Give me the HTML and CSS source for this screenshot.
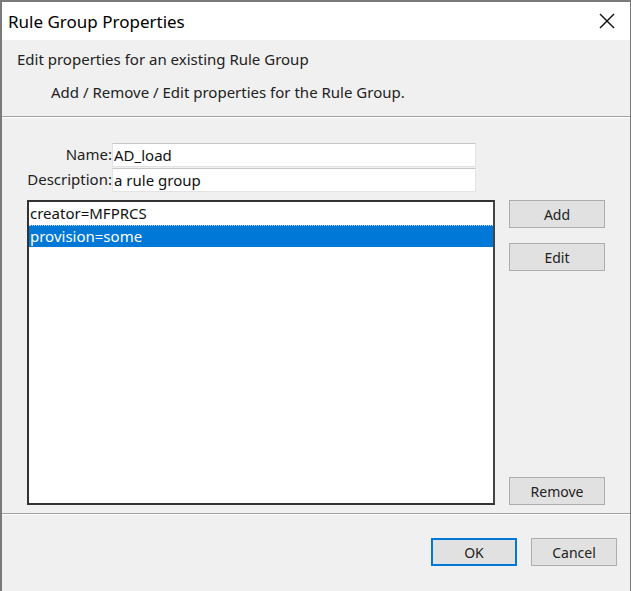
FILE: index.html
```html
<!DOCTYPE html>
<html lang="en">
<head>
    <meta charset="UTF-8">
    <title>Rule Group Properties</title>
    <link rel="stylesheet" href="styles.css">
</head>
<body>
    <div class="window">
        <div class="titlebar">
            <span class="title">Rule Group Properties</span>
            <svg class="close" width="18" height="18" viewBox="0 0 18 18" fill="none" stroke="#111" stroke-width="1.4">
                <line x1="2" y1="2" x2="16" y2="16"/>
                <line x1="16" y1="2" x2="2" y2="16"/>
            </svg>
        </div>
        <div class="header">
            <div class="heading">Edit properties for an existing Rule Group</div>
            <div class="subheading">Add / Remove / Edit properties for the Rule Group.</div>
        </div>
        <div class="content">
            <div class="fields">
                <label class="label">Name:</label>
                <input class="field" type="text" value="AD_load">
                <label class="label">Description:</label>
                <input class="field" type="text" value="a rule group">
            </div>
            <div class="list-area">
                <div class="listbox">
                    <div class="item">creator=MFPRCS</div>
                    <div class="item selected">provision=some</div>
                </div>
                <div class="side-buttons">
                    <button class="btn">Add</button>
                    <button class="btn">Edit</button>
                    <button class="btn push-down">Remove</button>
                </div>
            </div>
        </div>
        <div class="footer">
            <button class="btn default">OK</button>
            <button class="btn">Cancel</button>
        </div>
    </div>
</body>
</html>
```

FILE: styles.css
```css
:root {
    --face: #f0f0f0;
    --edge: #7a7a7a;
    --btn: #e1e1e1;
    --btn-border: #adadad;
    --select: #0078d7;
}

* {
    margin: 0;
    padding: 0;
    box-sizing: border-box;
    font-family: "Noto Sans", "DejaVu Sans", sans-serif;
}

body {
    width: 631px;
    height: 591px;
    overflow: hidden;
    background: var(--face);
}

.window {
    width: 631px;
    height: 591px;
    border: 2px solid var(--edge);
    border-bottom: none;
    border-right-width: 1px;
    background: var(--face);
    display: flex;
    flex-direction: column;
}

.titlebar {
    height: 38px;
    background: #fff;
    display: flex;
    align-items: center;
    justify-content: space-between;
    padding: 0 14px 0 6px;
}

.title {
    font-size: 17px;
    color: #000;
}

.header {
    height: 77px;
    padding: 9px 0 0 15px;
    border-bottom: 1px solid #a0a0a0;
    box-shadow: 0 1px 0 #fff;
    font-size: 15px;
    color: #222;
}

.subheading {
    margin: 13px 0 0 34px;
}

.content {
    height: 397px;
    padding: 26px 24px 0 25px;
    border-bottom: 1px solid #a0a0a0;
    box-shadow: 0 1px 0 #fff;
    font-size: 15px;
}

.fields {
    display: grid;
    grid-template-columns: 85px 364px;
    row-gap: 1px;
}

.label {
    text-align: right;
    color: #222;
    line-height: 23px;
    white-space: nowrap;
}

.field {
    height: 24px;
    border: 1px solid #e3e3e3;
    border-top-color: #c8c8c8;
    background: #fff;
    font-size: 15px;
    padding: 0 1px;
    color: #111;
    outline: none;
}

.list-area {
    display: flex;
    gap: 14px;
    margin-top: 8px;
}

.listbox {
    width: 468px;
    height: 305px;
    background: #fff;
    border: 2px solid #333;
    border-right-color: #444;
    padding-top: 1px;
}

.item {
    height: 22px;
    line-height: 21px;
    padding-left: 1px;
    color: #111;
}

.item.selected {
    background: var(--select);
    color: #fff;
    border-top: 1px dotted #b8d6f0;
}

.side-buttons {
    display: flex;
    flex-direction: column;
    gap: 15px;
}

.btn {
    width: 96px;
    height: 28px;
    background: var(--btn);
    border: 1px solid var(--btn-border);
    font-size: 14px;
    color: #222;
}

.push-down {
    margin-top: auto;
}

.footer {
    display: flex;
    justify-content: flex-end;
    gap: 14px;
    padding: 24px 13px 0 0;
}

.footer .btn {
    width: 86px;
}

.btn.default {
    border: 2px solid var(--select);
}
```
